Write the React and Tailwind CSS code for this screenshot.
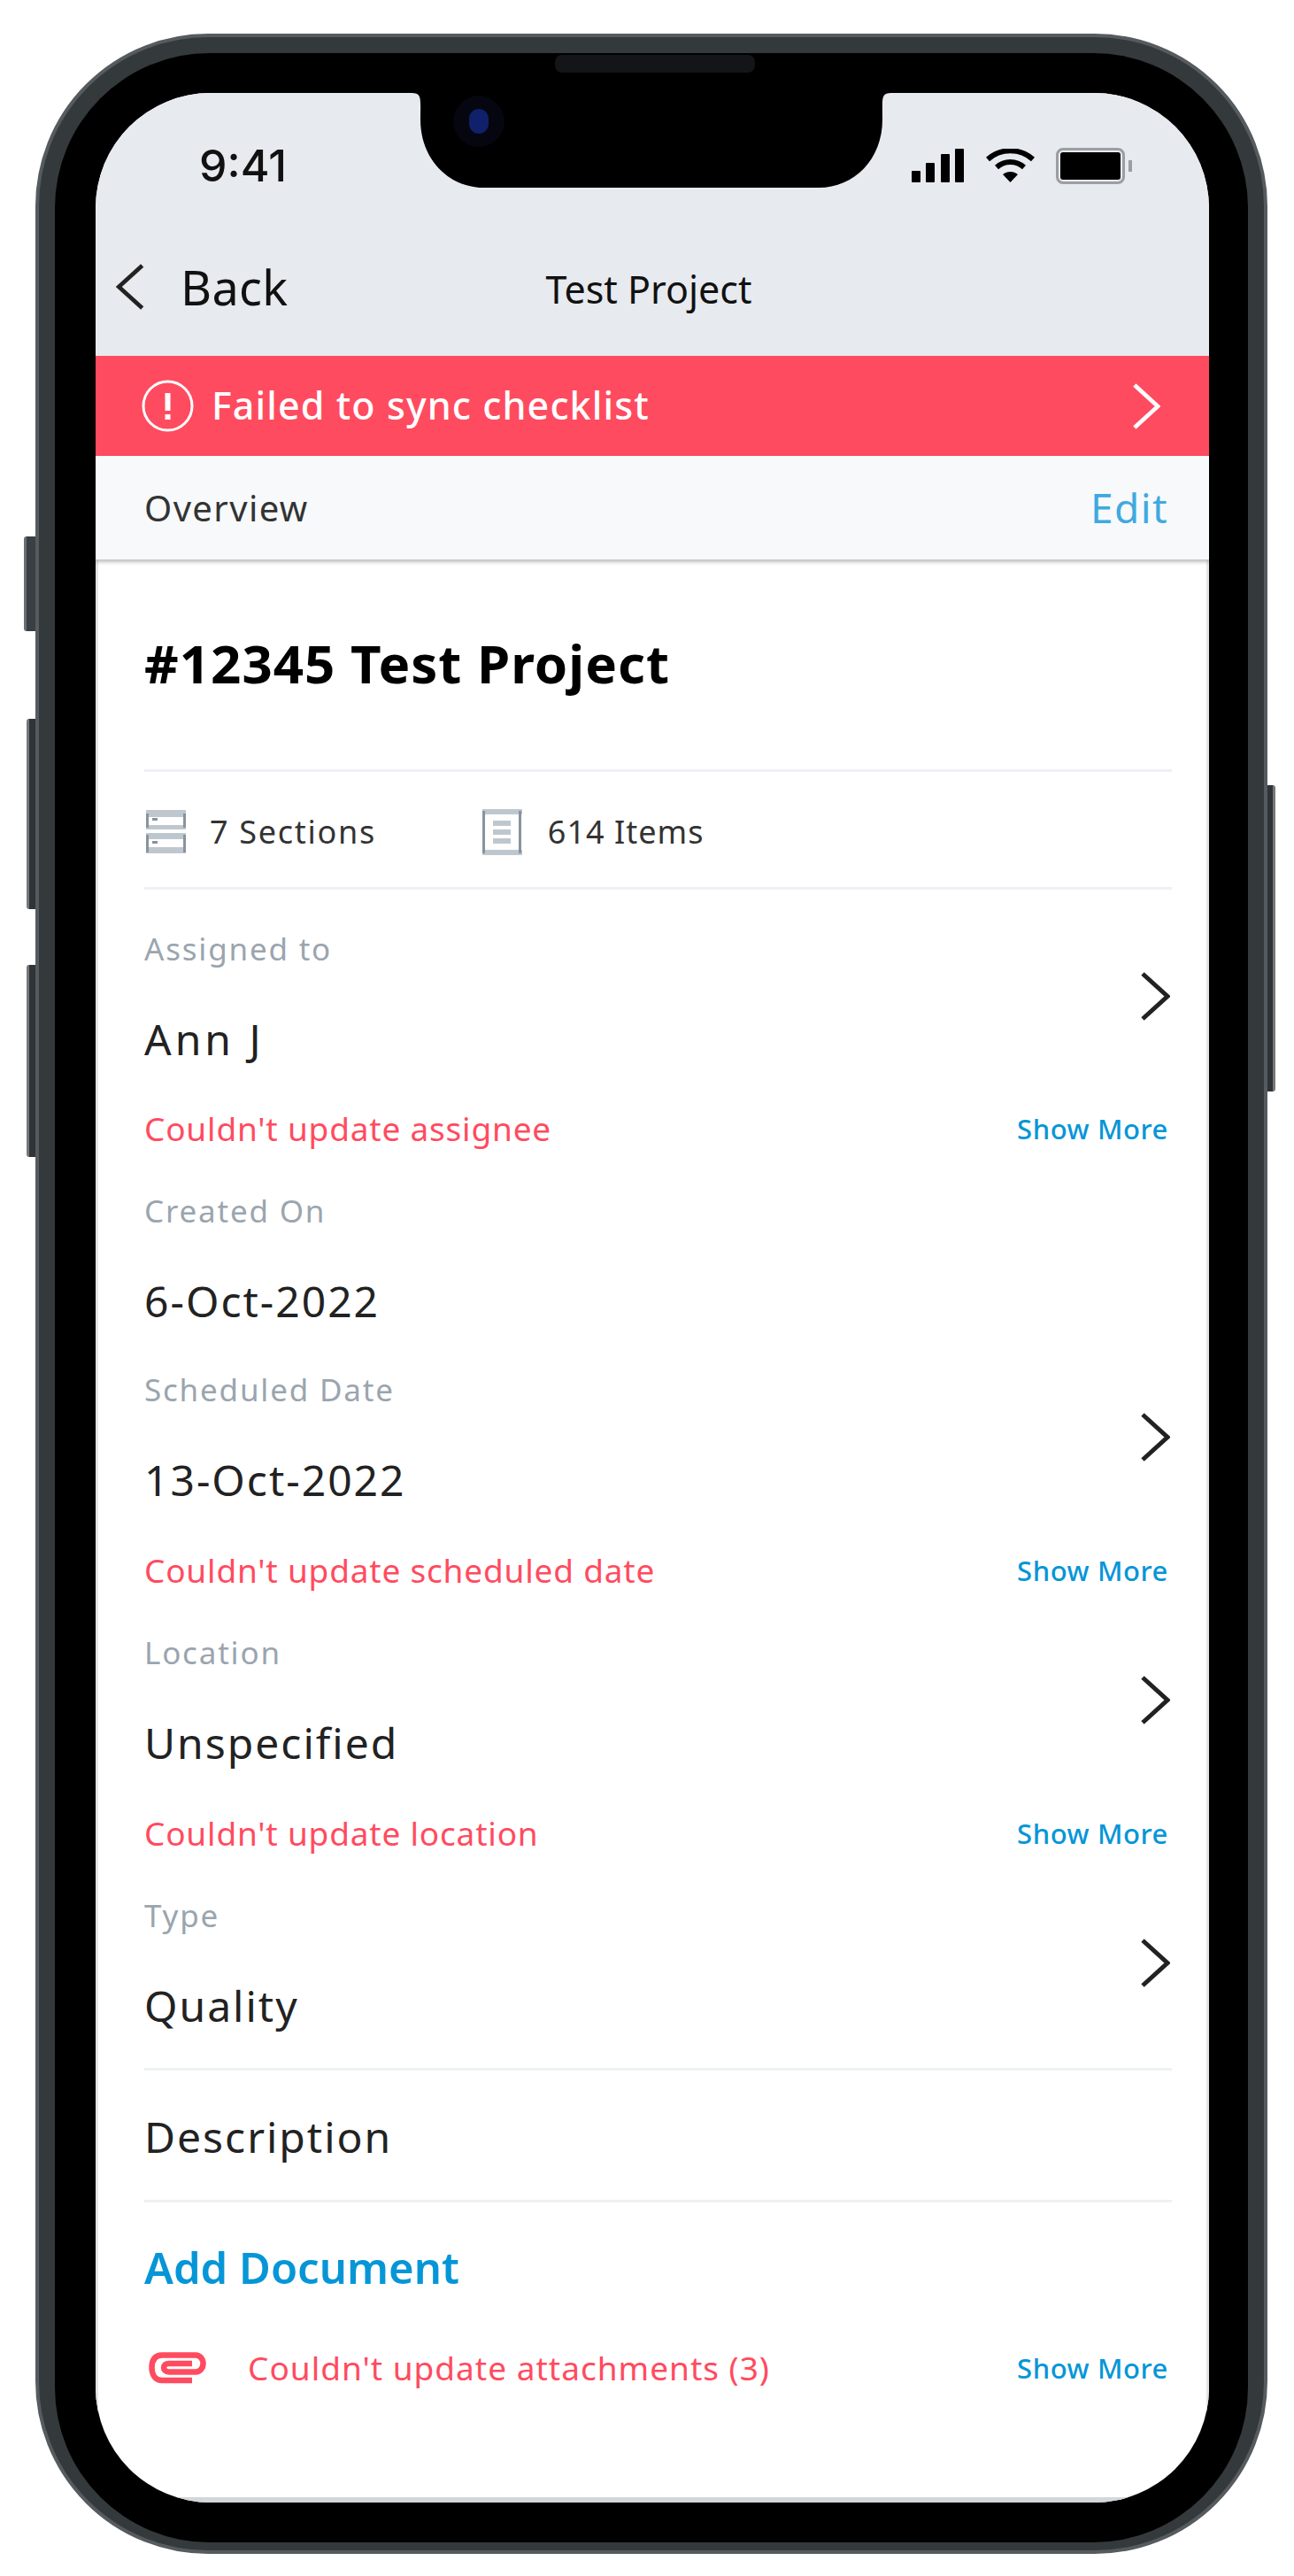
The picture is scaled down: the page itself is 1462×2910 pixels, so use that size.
import React from 'react';

const font = { fontFamily: '"Noto Sans", sans-serif' };

function Chevron({ className, dir = 'right', stroke = 5 }) {
  return (
    <svg viewBox="0 0 33 55" fill="none" stroke="currentColor" strokeWidth={stroke} className={className}>
      {dir === 'right' ? <path d="M2 2 L30 27.5 L2 53" /> : <path d="M31 2 L3 27.5 L31 53" />}
    </svg>
  );
}

function StatusIcons() {
  return (
    <div className="flex items-center">
      <svg viewBox="0 0 59 38" className="w-[59px] h-[38px] fill-black">
        <rect x="0" y="25" width="10" height="13" rx="1" />
        <rect x="16" y="16" width="10" height="22" rx="1" />
        <rect x="33" y="6" width="10" height="32" rx="1" />
        <rect x="49" y="0" width="10" height="38" rx="1" />
      </svg>
      <svg viewBox="0 0 55 38" className="w-[55px] h-[38px] ml-[25px]" fill="none" stroke="black" strokeWidth="6">
        <path d="M2 12 C16 -1 39 -1 53 12" />
        <path d="M12 21 C21 13 34 13 43 21" />
        <path d="M27.5 38 L19 29 C24 25 31 25 36 29 Z" fill="black" stroke="none" />
      </svg>
      <div className="flex items-center ml-[24px]">
        <div className="w-[78px] h-[41px] rounded-[8px] border-[3px] border-[#9b9ea3] p-[2px]">
          <div className="w-full h-full rounded-[3px] bg-black" />
        </div>
        <div className="w-[4px] h-[13px] ml-[4px] bg-[#9b9ea3]" />
      </div>
    </div>
  );
}

function ShowMore() {
  return <span className="text-[31px] font-medium text-[#0696d7] mr-[4px] tracking-[0.6px]">Show More</span>;
}

function Err({ text }) {
  return (
    <div className="flex items-center justify-between h-[60px]">
      <span className="text-[37px] text-[#ff4b5f] tracking-[0.8px]">{text}</span>
      <ShowMore />
    </div>
  );
}

function Field({ label, value, chevron, valueClass = 'tracking-[2px]' }) {
  return (
    <div className="flex items-center justify-between">
      <div>
        <div className="h-[60px] flex items-center text-[35px] text-[#9aa5ae] tracking-[1.8px]">{label}</div>
        <div className={`h-[60px] mt-[42px] flex items-center text-[48px] text-[#222] ${valueClass}`}>{value}</div>
      </div>
      {chevron && <Chevron className="w-[33px] h-[55px] mt-[5px] mr-[2px] text-[#222]" />}
    </div>
  );
}

function SectionsIcon() {
  return (
    <svg viewBox="0 0 45 49" className="w-[45px] h-[49px] ml-[2px]">
      <rect x="0" y="0" width="45" height="8" fill="#bfc7ce" />
      <rect x="0" y="17" width="45" height="5" fill="#bfc7ce" />
      <rect x="0" y="4" width="3" height="16" fill="#87949f" />
      <rect x="42" y="4" width="3" height="16" fill="#87949f" />
      <rect x="7" y="9" width="6" height="3" fill="#87949f" />
      <rect x="0" y="26" width="45" height="7" fill="#bfc7ce" />
      <rect x="0" y="42" width="45" height="7" fill="#bfc7ce" />
      <rect x="0" y="28" width="3" height="20" fill="#87949f" />
      <rect x="42" y="28" width="3" height="20" fill="#87949f" />
      <rect x="7" y="35" width="6" height="3" fill="#87949f" />
    </svg>
  );
}

function ItemsIcon() {
  return (
    <svg viewBox="0 0 45 52" className="w-[45px] h-[52px] ml-[120px]">
      <rect x="0" y="0" width="45" height="6" fill="#bfc7ce" />
      <rect x="0" y="46" width="45" height="6" fill="#bfc7ce" />
      <rect x="0" y="2" width="3" height="48" fill="#87949f" />
      <rect x="41" y="2" width="3" height="48" fill="#87949f" />
      <rect x="12" y="13" width="20" height="6" fill="#bfc7ce" />
      <rect x="12" y="23" width="20" height="6" fill="#bfc7ce" />
      <rect x="12" y="33" width="20" height="6" fill="#bfc7ce" />
    </svg>
  );
}

export default function App() {
  return (
    <div className="relative w-[1462px] h-[2910px] bg-white pt-[38px] pl-[40px]" style={font}>
      {/* side buttons */}
      <div className="absolute left-[27px] top-[606px] w-[18px] h-[107px] rounded-l-[3px] bg-[#3a3f43] border-l-[3px] border-[#6a6e72]" />
      <div className="absolute left-[30px] top-[812px] w-[15px] h-[215px] rounded-l-[3px] bg-[#2f3438] border-l-[3px] border-[#777]" />
      <div className="absolute left-[30px] top-[1090px] w-[15px] h-[217px] rounded-l-[3px] bg-[#2f3438] border-l-[3px] border-[#777]" />
      <div className="absolute left-[1426px] top-[887px] w-[15px] h-[346px] rounded-r-[3px] bg-[#2f3438] border-r-[3px] border-[#777]" />

      <div className="relative w-[1392px] h-[2847px] rounded-[195px] bg-[#34393c] border-[4px] border-[#565b5f] pt-[18px] px-[18px] pb-[9px]">
        <div className="relative w-full h-full rounded-[175px] bg-black pt-[45px] pb-[45px] pl-[46px] pr-[44px]">
          {/* speaker */}
          <div className="absolute left-[565px] top-[2px] w-[226px] h-[20px] rounded-[8px] bg-[#141516]" />

          <div className="relative h-full rounded-[130px] overflow-hidden bg-white flex flex-col">
            {/* header */}
            <div className="h-[297px] bg-[#e7eaef] shrink-0">
              <div className="flex items-center justify-between h-[164px] pl-[117px] pr-[87px]">
                <span className="text-[50px] font-medium text-[#111]" style={{ fontFamily: 'Inter, sans-serif' }}>9:41</span>
                <StatusIcons />
              </div>
              <div className="relative flex items-center h-[110px]">
                <Chevron dir="left" className="w-[32px] h-[52px] ml-[23px] text-[#222]" />
                <span className="ml-[41px] text-[54px] text-[#111] tracking-[0.3px]">Back</span>
                <span className="absolute left-0 right-0 text-center text-[43px] text-[#111] pt-[6px] pr-[8px]">Test Project</span>
              </div>
            </div>

            {/* error banner */}
            <div className="h-[113px] bg-[#ff4b5f] shrink-0 flex items-center justify-between pl-[52px] pr-[55px] text-white">
              <div className="flex items-center">
                <svg viewBox="0 0 59 59" className="w-[59px] h-[59px]" fill="none" stroke="white" strokeWidth="3">
                  <circle cx="29.5" cy="29.5" r="27.5" />
                  <path d="M29.5 15 V35" strokeWidth="6" />
                  <path d="M29.5 39 V45" strokeWidth="6" />
                </svg>
                <span className="ml-[20px] text-[43px] font-medium tracking-[1.1px]">Failed to sync checklist</span>
              </div>
              <Chevron className="w-[31px] h-[54px]" />
            </div>

            {/* overview bar */}
            <div className="h-[117px] bg-[#f7f9fb] shrink-0 flex items-center justify-between pl-[55px] pr-[46px] shadow-[0_3px_4px_rgba(0,0,0,0.25)] z-10">
              <span className="text-[40px] text-[#333] tracking-[1.4px]">Overview</span>
              <span className="text-[46px] text-[#3fa9e0] tracking-[1.4px]">Edit</span>
            </div>

            {/* body */}
            <div className="flex-1 pl-[55px] pr-[42px] shadow-[inset_3px_0_0_#e4e4e4,inset_-3px_0_0_#e4e4e4,inset_0_-6px_0_#d3d6da]">
              <h1 className="h-[240px] pb-[4px] flex items-center text-[60px] font-bold text-black tracking-[1px] border-b-[3px] border-[#eef1f4]">#12345 Test Project</h1>

              <div className="h-[133px] pt-[5px] flex items-center border-b-[3px] border-[#eef1f4] text-[36px] text-[#333]">
                <SectionsIcon />
                <span className="ml-[27px] tracking-[1.7px]">7 Sections</span>
                <ItemsIcon />
                <span className="ml-[29px] tracking-[1px]">614 Items</span>
              </div>

              <div className="pt-[37px]">
                <Field label="Assigned to" value="Ann J" chevron valueClass="tracking-[4px]" />
                <div className="mt-[41px]"><Err text="Couldn't update assignee" /></div>
                <div className="mt-[33px]"><Field label="Created On" value="6-Oct-2022" /></div>
                <div className="mt-[40px]"><Field label="Scheduled Date" value="13-Oct-2022" chevron /></div>
                <div className="mt-[42px]"><Err text="Couldn't update scheduled date" /></div>
                <div className="mt-[33px]"><Field label="Location" value="Unspecified" chevron /></div>
                <div className="mt-[42px]"><Err text="Couldn't update location" /></div>
                <div className="mt-[33px]"><Field label="Type" value="Quality" chevron /></div>
              </div>

              <div className="mt-[40px] border-t-[3px] border-[#eef1f4] h-[149px] pt-[3px] flex items-center text-[48px] text-[#222] tracking-[2px]">Description</div>
              <div className="border-t-[3px] border-[#eef1f4] h-[150px] flex items-center text-[49px] font-semibold text-[#0696d7]">Add Document</div>

              <div className="flex items-center justify-between h-[60px] mt-[10px]">
                <div className="flex items-center">
                  <svg viewBox="0 0 65 36" className="w-[65px] h-[36px] ml-[5px]" fill="none" stroke="#ff4b5f" strokeWidth="6.5">
                    <path d="M49 32 H15 C7 32 3.5 25 3.5 17.5 C3.5 9 7 3.5 15 3.5 H53 C58 3.5 61.5 8 61.5 13 C61.5 18 58 22.5 53 22.5 H23 C19 22.5 17 20 17 17.5 C17 15 19 13 23 13 H49" />
                  </svg>
                  <span className="ml-[47px] text-[37px] text-[#ff4b5f] tracking-[1px]">Couldn't update attachments (3)</span>
                </div>
                <ShowMore />
              </div>
            </div>
          </div>

          {/* notch */}
          <svg viewBox="0 0 542 107" className="absolute left-[403px] top-[45px] w-[542px] h-[107px] fill-black">
            <path d="M0 0 H542 C530 0 532 6 532 30 C532 75 500 107 460 107 H82 C42 107 10 75 10 30 C10 6 12 0 0 0 Z" />
          </svg>
          {/* camera */}
          <div className="absolute left-[450px] top-[48px] w-[58px] h-[58px] rounded-full bg-[#05060f] flex items-center justify-center">
            <div className="w-[22px] h-[28px] rounded-full bg-[#10206a]" />
          </div>
        </div>
      </div>
    </div>
  );
}
